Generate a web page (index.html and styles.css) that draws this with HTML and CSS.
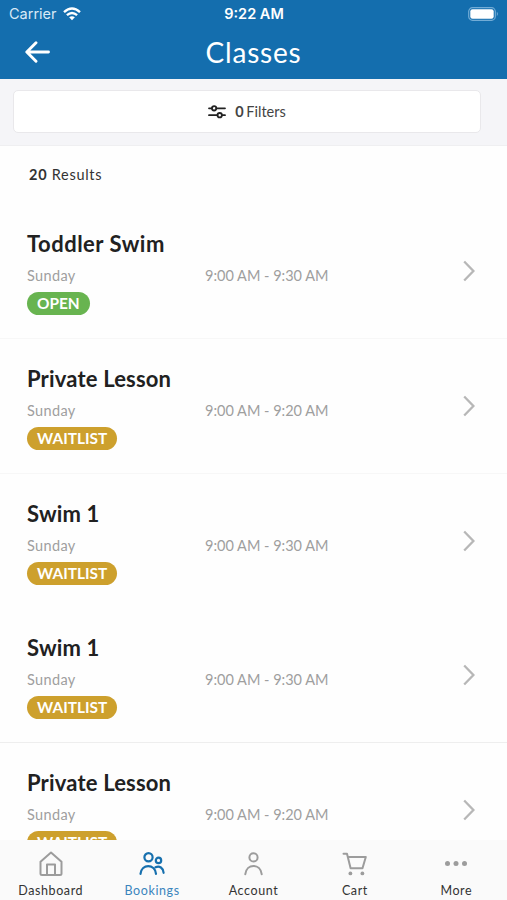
FILE: index.html
```html
<!DOCTYPE html>
<html lang="en">
<head>
<meta charset="utf-8">
<title>Classes</title>
<link rel="stylesheet" href="styles.css">
</head>
<body>
<div class="app">
  <header class="header">
    <div class="status">
      <div class="carrier"><span class="carrier-name">Carrier</span>
        <svg width="18" height="14" viewBox="0 0 18 14" fill="none" stroke="#fff" stroke-width="2.4"><path d="M1 5.2Q9-2 17 5.2M3.9 8.2Q9 3.7 14.1 8.2"/><path d="M9 13.2L6.1 10.3Q9 8 11.9 10.3Z" fill="#fff" stroke="none"/></svg>
      </div>
      <span class="clock">9:22 AM</span>
      <svg class="battery" width="31" height="14" viewBox="0 0 31 14"><rect x=".7" y=".7" width="26.6" height="12.6" rx="3.8" fill="none" stroke="#72acd6" stroke-width="1.2"/><rect x="2.3" y="2.3" width="23.4" height="9.4" rx="2.2" fill="#fff"/><path d="M28.8 4.8Q31 7 28.8 9.2Z" fill="#72acd6"/></svg>
    </div>
    <div class="titlebar">
      <svg class="back" width="26" height="22" viewBox="0 0 26 22" fill="none" stroke="#fff" stroke-width="2.9" stroke-linecap="round" stroke-linejoin="round"><path d="M11 1.8L1.8 11L11 20.2M2 11H23.5"/></svg>
      <h1>Classes</h1>
    </div>
  </header>
  <section class="filterbar">
    <button class="filters">
      <svg width="18" height="14" viewBox="0 0 18 14" fill="none" stroke="#222" stroke-width="1.8" stroke-linecap="round"><path d="M1 3.3H3.8M8.4 3.3H17M1 10.2H9.4M14 10.2H17"/><circle cx="6.1" cy="3.3" r="2.2"/><circle cx="11.7" cy="10.2" r="2.2"/></svg>
      <span class="filter-label"><b>0</b> Filters</span>
    </button>
  </section>
  <main class="list">
    <p class="results"><b>20</b> <span>Results</span></p>
    <article class="row">
      <h2 class="wide">Toddler Swim</h2>
      <div class="when"><span class="day">Sunday</span><span class="time">9:00 AM - 9:30 AM</span></div>
      <span class="badge open">OPEN</span>
      <svg class="chevron" viewBox="0 0 12 22"><path d="M1.2 1.5L10.4 11L1.2 20.5"/></svg>
    </article>
    <article class="row">
      <h2>Private Lesson</h2>
      <div class="when"><span class="day">Sunday</span><span class="time">9:00 AM - 9:20 AM</span></div>
      <span class="badge wait">WAITLIST</span>
      <svg class="chevron" viewBox="0 0 12 22"><path d="M1.2 1.5L10.4 11L1.2 20.5"/></svg>
    </article>
    <article class="row plain">
      <h2>Swim 1</h2>
      <div class="when"><span class="day">Sunday</span><span class="time">9:00 AM - 9:30 AM</span></div>
      <span class="badge wait">WAITLIST</span>
      <svg class="chevron" viewBox="0 0 12 22"><path d="M1.2 1.5L10.4 11L1.2 20.5"/></svg>
    </article>
    <article class="row strong">
      <h2>Swim 1</h2>
      <div class="when"><span class="day">Sunday</span><span class="time">9:00 AM - 9:30 AM</span></div>
      <span class="badge wait">WAITLIST</span>
      <svg class="chevron" viewBox="0 0 12 22"><path d="M1.2 1.5L10.4 11L1.2 20.5"/></svg>
    </article>
    <article class="row">
      <h2>Private Lesson</h2>
      <div class="when"><span class="day">Sunday</span><span class="time">9:00 AM - 9:20 AM</span></div>
      <span class="badge wait">WAITLIST</span>
      <svg class="chevron" viewBox="0 0 12 22"><path d="M1.2 1.5L10.4 11L1.2 20.5"/></svg>
    </article>
  </main>
  <nav class="tabs">
    <a class="tab"><svg width="26" height="26" viewBox="0 0 26 26"><path d="M2.5 10.8L13 1.5L23.5 10.8V22.5Q23.5 24 22 24H4Q2.5 24 2.5 22.5ZM9 23.5V13.5H17V23.5"/></svg><span>Dashboard</span></a>
    <a class="tab active"><svg width="26" height="26" viewBox="0 0 26 26"><circle cx="9.5" cy="6.3" r="4.1"/><circle cx="19.5" cy="9.4" r="2.7"/><path d="M1.5 22.8C2.5 12.5 16 12.5 17 22.8M16.5 16.3C20.5 14.3 24.3 17 24.6 21.8"/></svg><span>Bookings</span></a>
    <a class="tab"><svg width="26" height="26" viewBox="0 0 26 26"><circle cx="13.5" cy="6.4" r="4.1"/><path d="M5.3 23.2C6.5 12.2 20.5 12.2 21.7 23.2"/></svg><span>Account</span></a>
    <a class="tab"><svg width="26" height="26" viewBox="0 0 26 26"><path d="M1.5 2.8H5L8.6 17.2H20.5L23.8 6H5.8"/><g class="dot"><circle cx="8.4" cy="22.4" r="1.9"/><circle cx="20.4" cy="22.4" r="1.9"/></g></svg><span>Cart</span></a>
    <a class="tab"><svg width="26" height="26" viewBox="0 0 26 26"><g class="dot"><circle cx="4.5" cy="12.5" r="2.5"/><circle cx="13" cy="12.5" r="2.5"/><circle cx="21.5" cy="12.5" r="2.5"/></g></svg><span>More</span></a>
  </nav>
</div>
</body>
</html>
```
FILE: styles.css
```css
* { box-sizing: border-box; }
body { margin: 0; font-family: Lato, "Liberation Sans", sans-serif; color: #222; background: #fff; }
.app { height: 900px; display: flex; flex-direction: column; overflow: hidden; }

.header { flex: none; height: 79px; background: #146eae; color: #fff; }
.status { height: 27px; padding: 0 8px 0 9px; display: grid; grid-template-columns: 1fr auto 1fr; align-items: center; }
.carrier { display: flex; align-items: center; gap: 6px; font: 14.5px/20px Inter, sans-serif; }
.carrier-name { color: #d8e9f6; }
.clock { font: 600 14.5px/20px Inter, sans-serif; }
.battery { justify-self: end; }
.titlebar { height: 50px; padding: 0 25px; display: grid; grid-template-columns: 26px 1fr 26px; align-items: center; }
h1 { margin: 0; text-align: center; font-size: 28px; line-height: 34px; font-weight: 400; letter-spacing: 0.8px; }

.filterbar { flex: none; height: 67px; padding: 11px 26px 0 13px; background: #f5f5f8; border-bottom: 1px solid #efeff1; }
.filters { width: 100%; height: 43px; padding: 0; border: 1px solid #e9e8eb; border-radius: 5px; background: #fff; display: flex; justify-content: center; align-items: center; gap: 9px; font: 14.5px/20px Lato, sans-serif; color: #444; }
.filter-label { word-spacing: -1px; }

.list { flex: 1; min-height: 0; overflow: hidden; background: #fefefe; }
.results { height: 58px; margin: 0; padding: 18.5px 29px 0; font-size: 14.5px; line-height: 20px; letter-spacing: 0.72px; color: #333; }
.row { height: 134.8px; padding: 25px 32px 0 27px; border-bottom: 1px solid #f7f7f7; display: grid; grid-template-columns: 1fr 12px; grid-template-rows: 30px 34px 24px; }
.row.plain { border-color: transparent; }
.row.strong { border-color: #eee; }
h2 { margin: 0; font-size: 22px; line-height: 30px; font-weight: 700; color: #212121; white-space: nowrap; letter-spacing: 0.17px; }
h2.wide { letter-spacing: 0.5px; }
.when { grid-row: 2; display: grid; grid-template-columns: 178px 1fr; font-size: 14.5px; line-height: 34px; color: #9f9f9f; }
.day { letter-spacing: 0.35px; }
.badge { grid-row: 3; justify-self: start; height: 23px; margin-top: -1px; padding: 0 10px; border-radius: 12px; color: #fff; font-size: 15.4px; line-height: 22.5px; font-weight: 700; }
.open { background: #68b450; }
.wait { background: #cda02d; }
.chevron { grid-column: 2; grid-row: 2; width: 12px; height: 22px; align-self: start; margin-top: 1px; fill: none; stroke: #b7b7b7; stroke-width: 2.3; }

.tabs { flex: none; height: 60px; background: #fafafa; display: grid; grid-template-columns: repeat(5, 1fr); }
.tab { display: flex; flex-direction: column; align-items: center; padding-top: 11px; font-size: 12.5px; line-height: 18px; color: #333; letter-spacing: 0.6px; }
.tab svg { fill: none; stroke: #9c9c9c; stroke-width: 2; margin-bottom: 5px; stroke-linecap: round; stroke-linejoin: round; }
.tab .dot { fill: #9c9c9c; stroke: none; }
.tab.active { color: #3a85bd; }
.tab.active svg { stroke: #1770ae; stroke-width: 2.2; }
```
